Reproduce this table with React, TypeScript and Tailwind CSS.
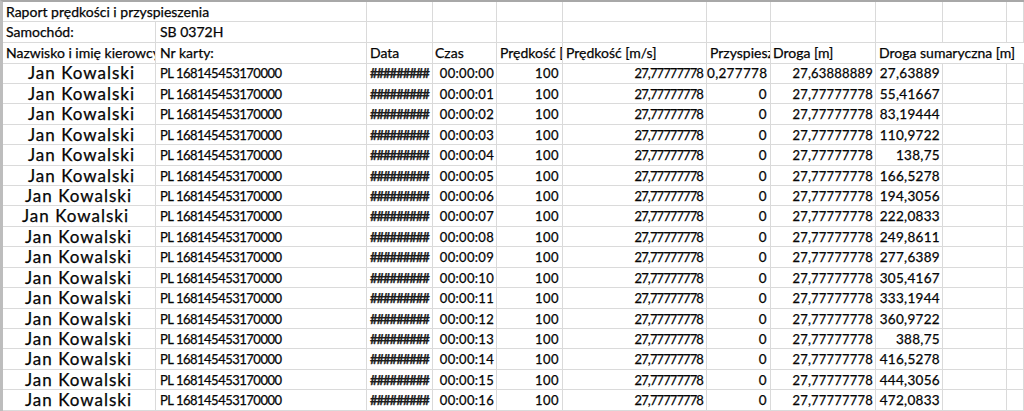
import React from "react";

const cum = [
  "27,63889", "55,41667", "83,19444", "110,9722", "138,75", "166,5278", "194,3056",
  "222,0833", "249,8611", "277,6389", "305,4167", "333,1944", "360,9722", "388,75",
  "416,5278", "444,3056", "472,0833",
];

const namePad = (i: number) =>
  i < 6 ? "pl-[25px]" : i === 6 ? "pl-[22px]" : i === 7 ? "pl-[19px]" : "pl-[22px]";

const cell = "border-r border-b border-[#dadada] overflow-hidden whitespace-nowrap leading-[20px]";
const row = "grid grid-cols-[153px_211px_66px_64px_66px_144px_64px_105px_67px_64px_1fr] h-[20.45px]";

export default function App() {
  return (
    <div
      className="w-[1024px] h-[411px] overflow-hidden bg-white text-[#050505] [-webkit-text-stroke:0.25px_#050505] border-t-2 border-t-[#a8a8a8] border-l-[3px] border-l-[#bdbdbd]"
      style={{ fontFamily: "Lato, 'Open Sans', sans-serif" }}
    >
      {/* Title row */}
      <div className={row}>
        <div className={`${cell} col-span-2 pl-[3px] text-[14px]`}>
          Raport prędkości i przyspieszenia
        </div>
        <div className={cell}></div>
        <div className={cell}></div>
        <div className={cell}></div>
        <div className={cell}></div>
        <div className={cell}></div>
        <div className={cell}></div>
        <div className={cell}></div>
        <div className={cell}></div>
        <div className={cell}></div>
      </div>
      {/* Samochód row */}
      <div className={row}>
        <div className={`${cell} pl-[3px] text-[14px]`}>Samochód:</div>
        <div className={`${cell} pl-[4px] text-[14px]`}>SB 0372H</div>
        <div className={cell}></div>
        <div className={cell}></div>
        <div className={cell}></div>
        <div className={cell}></div>
        <div className={cell}></div>
        <div className={cell}></div>
        <div className={cell}></div>
        <div className={cell}></div>
        <div className={cell}></div>
      </div>
      {/* Header row */}
      <div className={row}>
        <div className={`${cell} pl-[3px] text-[14px]`}>Nazwisko i imię kierowcy</div>
        <div className={`${cell} pl-[4px] text-[14px]`}>Nr karty:</div>
        <div className={`${cell} pl-[3px] text-[14px]`}>Data</div>
        <div className={`${cell} pl-[2px] text-[14px]`}>Czas</div>
        <div className={`${cell} pl-[3px] text-[14px]`}>Prędkość [km/h]</div>
        <div className={`${cell} pl-[3px] text-[14px]`}>Prędkość [m/s]</div>
        <div className={`${cell} pl-[3px] text-[14px]`}>Przyspieszenie</div>
        <div className={`${cell} pl-[2px] text-[14px]`}>Droga [m]</div>
        <div className="col-span-3 border-b border-[#dadada] whitespace-nowrap leading-[20px] pl-[3px] text-[14px]">
          Droga sumaryczna [m]
        </div>
      </div>
      {cum.map((c, i) => (
        <div key={i} className={row}>
          <div className={`${cell} ${namePad(i)} text-[17px] tracking-[1px]`}>Jan Kowalski</div>
          <div className={`${cell} pl-[4px] text-[13px] tracking-[-0.5px]`}>PL 168145453170000</div>
          <div className={`${cell} pl-[3px] text-[13px] font-bold tracking-[-1px] text-[#222]`}>#########</div>
          <div className={`${cell} text-right pr-[2px] text-[13px] tracking-[0.3px]`}>
            {`00:00:${String(i).padStart(2, "0")}`}
          </div>
          <div className={`${cell} text-right pr-[3px] text-[13px] tracking-[0.5px]`}>100</div>
          <div className={`${cell} text-right pr-[3px] text-[13px] tracking-[-0.9px]`}>27,77777778</div>
          <div className={`${cell} text-right pr-[3px] text-[13.5px] tracking-[0.3px]`}>
            {i === 0 ? "0,277778" : "0"}
          </div>
          <div className={`${cell} text-right pr-[2px] text-[13px] tracking-[0.2px]`}>
            {i === 0 ? "27,63888889" : "27,77777778"}
          </div>
          <div className={`${cell} text-right pr-[2px] text-[13.5px] tracking-[0.3px]`}>{c}</div>
          <div className={cell}></div>
          <div className={cell}></div>
        </div>
      ))}
    </div>
  );
}
